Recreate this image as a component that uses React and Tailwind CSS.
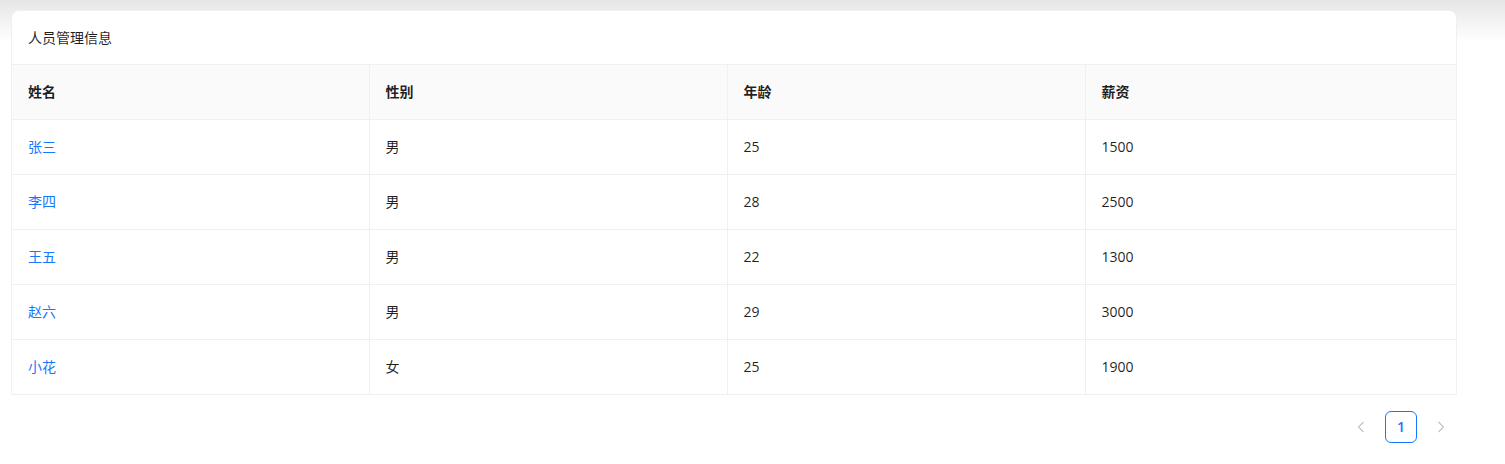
const FONT = { fontFamily: '"Open Sans", "Noto Sans CJK SC", sans-serif' }

const rows = [
  { name: '张三', gender: '男', age: 25, salary: 1500 },
  { name: '李四', gender: '男', age: 28, salary: 2500 },
  { name: '王五', gender: '男', age: 22, salary: 1300 },
  { name: '赵六', gender: '男', age: 29, salary: 3000 },
  { name: '小花', gender: '女', age: 25, salary: 1900 },
]

const cols = ['姓名', '性别', '年龄', '薪资']

function Arrow({ dir }) {
  return (
    <svg width="8" height="12" viewBox="0 0 8 12" fill="none">
      <path
        d={dir === 'left' ? 'M6.5 1 1.5 6l5 5' : 'M1.5 1l5 5-5 5'}
        stroke="currentColor"
        strokeWidth="1.1"
      />
    </svg>
  )
}

export default function App() {
  return (
    <div
      className="min-h-[464px] w-[1505px] bg-[linear-gradient(180deg,#e6e6e6_0px,#ffffff_42px)] pt-[10px] pl-[11px] text-sm text-[rgba(0,0,0,0.88)]"
      style={FONT}
    >
      <div className="w-[1446px] rounded-t-lg border border-b-0 border-[#f0f0f0] bg-white">
        <div className="flex h-[54px] items-center border-b border-[#f0f0f0] px-4">
          人员管理信息
        </div>
        <table className="w-full table-fixed border-collapse">
          <colgroup>
            <col className="w-[357px]" />
            <col className="w-[358px]" />
            <col className="w-[358px]" />
            <col />
          </colgroup>
          <thead>
            <tr className="bg-[#fafafa]">
              {cols.map((c, i) => (
                <th
                  key={c}
                  className={`h-[54px] border-b border-[#f0f0f0] px-4 text-left font-semibold ${i < 3 ? 'border-r' : ''}`}
                >
                  {c}
                </th>
              ))}
            </tr>
          </thead>
          <tbody>
            {rows.map((r) => (
              <tr key={r.name}>
                <td className="h-[55px] border-r border-b border-[#f0f0f0] px-4 text-[#1677ff]">{r.name}</td>
                <td className="h-[55px] border-r border-b border-[#f0f0f0] px-4">{r.gender}</td>
                <td className="h-[55px] border-r border-b border-[#f0f0f0] px-4">{r.age}</td>
                <td className="h-[55px] border-b border-[#f0f0f0] px-4">{r.salary}</td>
              </tr>
            ))}
          </tbody>
        </table>
      </div>

      <div className="mt-4 flex w-[1446px] items-center justify-end gap-2">
        <button className="flex h-8 w-8 items-center justify-center text-[rgba(0,0,0,0.25)]">
          <Arrow dir="left" />
        </button>
        <button className="flex h-8 w-8 items-center justify-center rounded-md border border-[#1677ff] font-semibold text-[#1677ff]">
          1
        </button>
        <button className="flex h-8 w-8 items-center justify-center text-[rgba(0,0,0,0.25)]">
          <Arrow dir="right" />
        </button>
      </div>
    </div>
  )
}
